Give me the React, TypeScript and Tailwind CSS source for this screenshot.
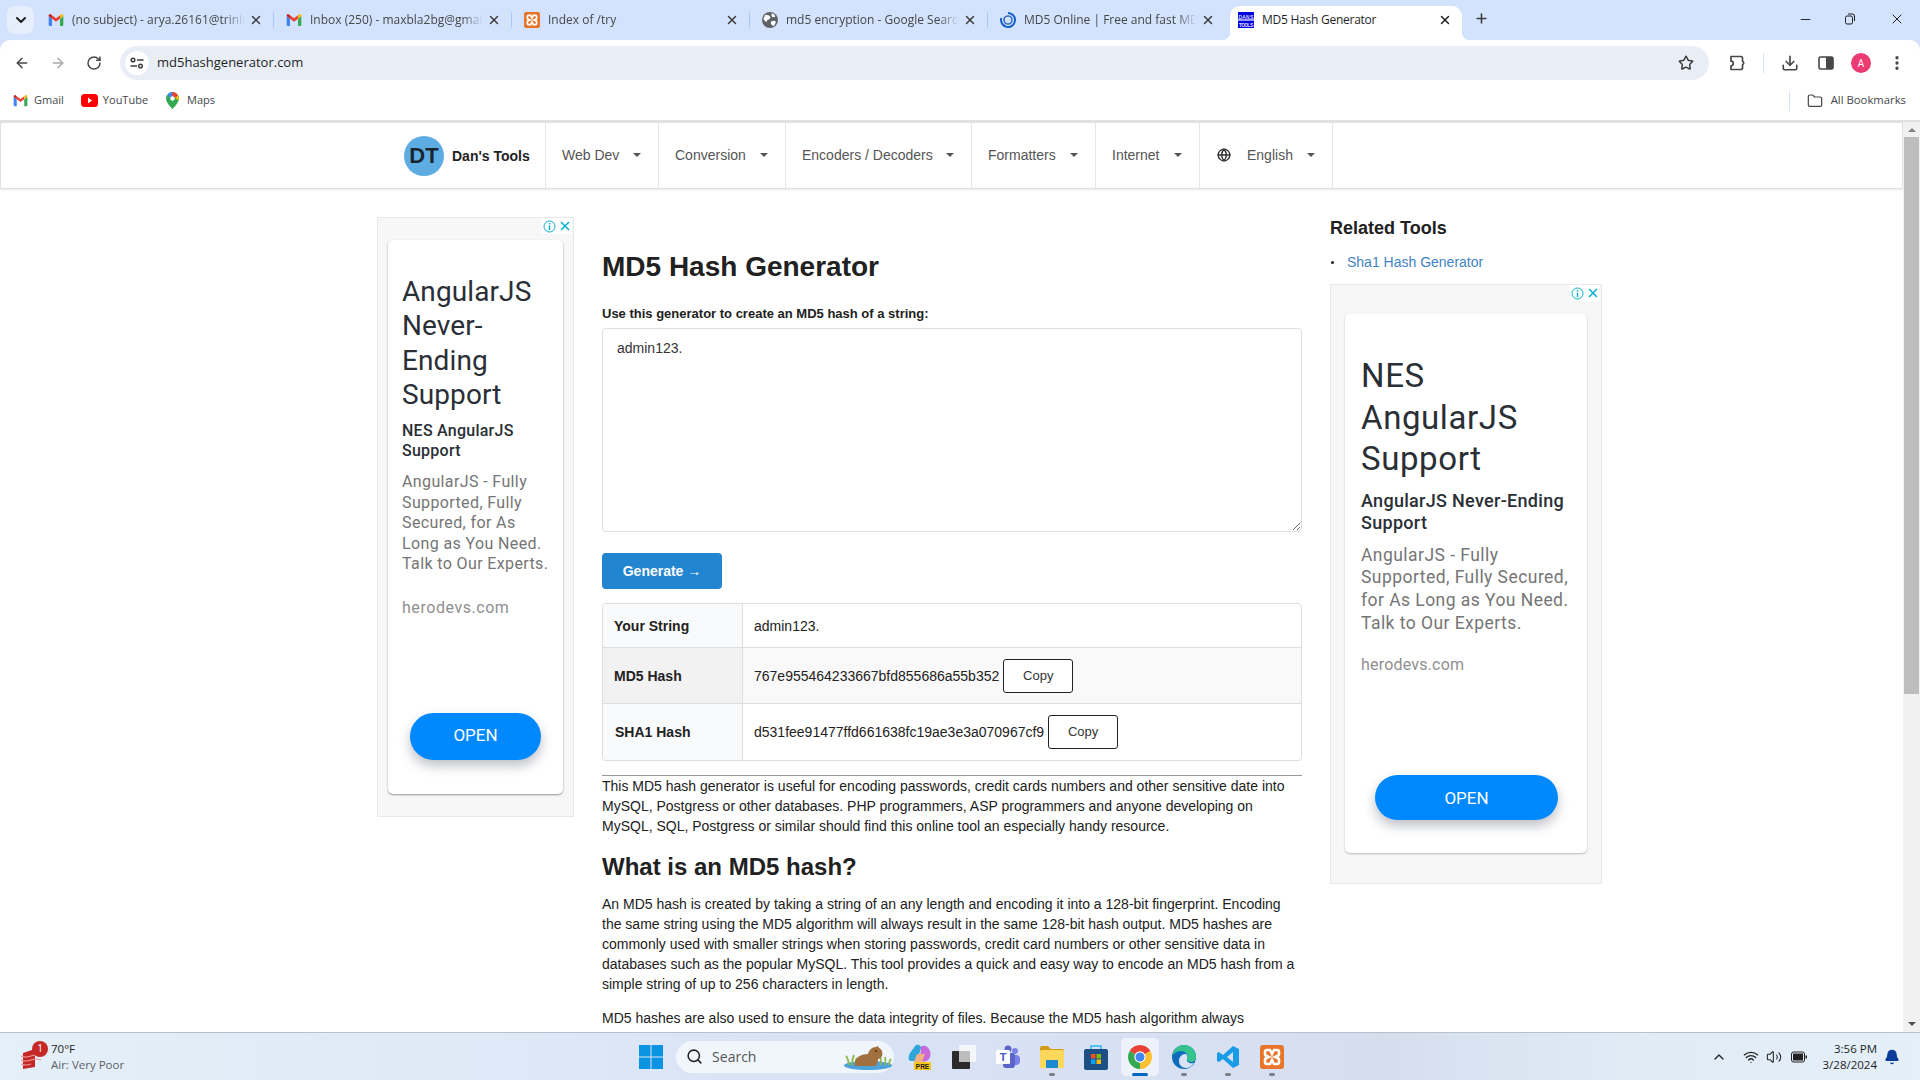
import { ReactNode } from 'react'
import {
  ArrowLeft,
  ArrowRight,
  RotateCw,
  Star,
  Download,
  EllipsisVertical,
  Folder,
  X,
  Plus,
  Minus,
  ChevronDown,
  ChevronUp,
  Search,
  Wifi,
  Volume2,
  Bell,
  Globe,
} from 'lucide-react'

const GmailIcon = ({ size = 16 }: { size?: number }) => (
  <svg width={size} height={size} viewBox="0 0 24 24" className="shrink-0">
    <path d="M1 6v13a2 2 0 0 0 2 2h3V10z" fill="#4285f4" />
    <path d="M23 6v13a2 2 0 0 1-2 2h-3V10z" fill="#34a853" />
    <path d="M6 10V5l6 4.5L18 5v5l-6 4.5z" fill="#ea4335" />
    <path d="M18 5l1.800-1.400A2 2 0 0 1 23 5.200V6l-5 4z" fill="#fbbc04" />
    <path d="M6 5L4.200 3.600A2 2 0 0 0 1 5.200V6l5 4z" fill="#c5221f" />
  </svg>
)

const XamppIcon = ({ size = 16 }: { size?: number }) => (
  <svg width={size} height={size} viewBox="0 0 24 24" className="shrink-0">
    <rect width="24" height="24" rx="3" fill="#e8742a" />
    <path d="M7 5h3l2 4 2-4h3a2 2 0 0 1 2 2v2a2 2 0 0 1-2 2l-2 1 2 1a2 2 0 0 1 2 2v2a2 2 0 0 1-2 2h-3l-2-4-2 4H7a2 2 0 0 1-2-2v-2a2 2 0 0 1 2-2l2-1-2-1a2 2 0 0 1-2-2V7a2 2 0 0 1 2-2z" fill="none" stroke="#fff" strokeWidth="2.600" />
  </svg>
)

const EarthIcon = () => (
  <svg width="16" height="16" viewBox="0 0 24 24" className="shrink-0">
    <circle cx="12" cy="12" r="12" fill="#5f6368" />
    <path d="M5 4l5 1 3 3-2 3-3 1-1 3-3-2-2-3zM14 14l5-1 2 2-3 6-3-1-2-3zM15 2l4 2 1 3-4 1-2-3z" fill="#fff" />
  </svg>
)

const Md5OnlineIcon = () => (
  <svg width="16" height="16" viewBox="0 0 24 24" className="shrink-0">
    <path d="M12 1.500A10.500 10.500 0 1 1 2 9" fill="none" stroke="#1a5fd0" strokeWidth="3" />
    <circle cx="12" cy="12" r="6" fill="none" stroke="#3b6fc4" strokeWidth="2.500" />
  </svg>
)

const DansFavicon = () => (
  <svg width="16" height="16" viewBox="0 0 16 16" className="shrink-0">
    <rect width="16" height="16" fill="#0000e0" />
    <rect y="7.400" width="16" height="1.200" fill="#fff" />
    <text x="0.500" y="6.500" fontSize="6" fontFamily="Liberation Mono" fill="#fff" textLength="15">DANS</text>
    <text x="0.500" y="14.500" fontSize="6" fontFamily="Liberation Mono" fill="#fff" textLength="15">TOOLS</text>
  </svg>
)

const tabs = [
  { title: '(no subject) - arya.26161@trinity', icon: <GmailIcon /> },
  { title: 'Inbox (250) - maxbla2bg@gmail.com', icon: <GmailIcon /> },
  { title: 'Index of /try', icon: <XamppIcon /> },
  { title: 'md5 encryption - Google Search', icon: <EarthIcon /> },
  { title: 'MD5 Online | Free and fast MD5', icon: <Md5OnlineIcon /> },
]

function TabStrip() {
  return (
    <div className="flex h-10 shrink-0 items-start bg-[#d3e3fd] pl-[7px] pt-[6px] font-['Open_Sans',sans-serif] text-xs text-[#45474a]">
      <div className="flex h-7 w-[27px] items-center justify-center rounded-lg bg-[#e6eefc]">
        <ChevronDown className="h-4 w-4 text-[#1f1f1f]" strokeWidth={3} />
      </div>
      <div className="ml-[2px] mt-[3px] flex w-[1194px]">
        {tabs.map((t, i) => (
          <div key={t.title} className="flex h-[22px] w-[238px] items-center pl-3 pr-[11px]">
            {t.icon}
            <span className="ml-2 flex-1 overflow-hidden whitespace-nowrap [mask-image:linear-gradient(90deg,#000_88%,transparent)]">{t.title}</span>
            <X className="ml-1 h-[14px] w-[14px] text-[#3c3c3c]" strokeWidth={2.5} />
            {i < 4 && <span className="ml-[10px] mr-[-11px] h-4 w-[1px] bg-[#a8c7fa]" />}
          </div>
        ))}
      </div>
      <div className="relative flex h-[34px] w-[232px] items-start rounded-t-[10px] bg-white pl-2 pr-[10px] pt-[6px] text-[#1f1f1f]">
        <span className="absolute bottom-0 left-[-8px] h-2 w-2 bg-[radial-gradient(circle_at_0_0,#d3e3fd_8px,#fff_8.5px)]" />
        <span className="absolute bottom-0 right-[-8px] h-2 w-2 bg-[radial-gradient(circle_at_100%_0,#d3e3fd_8px,#fff_8.5px)]" />
        <DansFavicon />
        <span className="ml-2 flex-1 whitespace-nowrap tracking-[-0.25px]">MD5 Hash Generator</span>
        <X className="mt-[1px] h-[14px] w-[14px] text-[#1f1f1f]" strokeWidth={2.5} />
      </div>
      <Plus className="ml-[12px] mt-[5px] h-[15px] w-[15px] text-[#3c3c3c]" strokeWidth={2.5} />
      <div className="ml-auto flex items-center pr-[15px] pt-[5px] text-[#1f1f1f]">
        <Minus className="mr-[31px] h-[15px] w-[15px]" strokeWidth={1.5} />
        <svg width="12" height="12" viewBox="0 0 12 12" className="mr-[33px]" fill="none" stroke="#1f1f1f">
          <rect x="1.500" y="3" width="7" height="8" rx="1.500" />
          <path d="M4 1h4.500A2 2 0 0 1 10.500 3v5" />
        </svg>
        <X className="h-4 w-4" strokeWidth={1.5} />
      </div>
    </div>
  )
}

function Toolbar() {
  return (
    <div className="flex h-[46px] shrink-0 items-center rounded-t-[10px] bg-white text-[#474747]">
      <ArrowLeft className="ml-[14px] h-4 w-4" strokeWidth={2.2} />
      <ArrowRight className="ml-5 h-4 w-4 text-[#a9a9a9]" strokeWidth={2.2} />
      <RotateCw className="ml-5 h-4 w-4" strokeWidth={2.2} />
      <div className="ml-[18px] flex h-[34px] w-[1589px] items-center rounded-full bg-[#e9eef6] pl-[5px] pr-[15px]">
        <div className="flex h-6 w-6 items-center justify-center rounded-full bg-white">
          <svg width="14" height="12" viewBox="0 0 14 12" fill="none" stroke="#3c3c3c" strokeWidth="1.500">
            <circle cx="3" cy="3" r="1.800" />
            <path d="M7 3h6.500M0.500 9H7" />
            <circle cx="10.500" cy="9" r="1.800" />
          </svg>
        </div>
        <span className="ml-[8px] flex-1 font-['Open_Sans',sans-serif] text-[13px] text-[#1f1f1f]">md5hashgenerator.com</span>
        <Star className="h-4 w-4 text-[#3c3c3c]" strokeWidth={2.2} />
      </div>
      <svg width="16" height="18" viewBox="0 0 16 18" fill="none" stroke="#474747" strokeWidth="1.700" strokeLinejoin="round" className="ml-[20px]">
        <path d="M2 2.500h10a1.500 1.500 0 0 1 1.500 1.500v3.300a1.800 1.800 0 0 1 0 3.400V14a1.500 1.500 0 0 1-1.500 1.500H2v-3.700a2 2 0 0 0 0-4.600z" />
      </svg>
      <span className="ml-[18px] h-5 w-[1px] bg-[#d3e3fd]" />
      <Download className="ml-[17px] h-[18px] w-[18px]" strokeWidth={2.2} />
      <svg width="16" height="16" viewBox="0 0 16 16" className="ml-[19px]">
        <rect x="1" y="2" width="14" height="12" rx="1.500" fill="none" stroke="#474747" strokeWidth="1.600" />
        <rect x="8" y="2" width="7" height="12" fill="#474747" />
      </svg>
      <div className="ml-[17px] flex h-5 w-5 items-center justify-center rounded-full bg-[#ec3a72] font-['Open_Sans',sans-serif] text-[10px] text-white">A</div>
      <EllipsisVertical className="ml-[17px] h-[18px] w-[18px]" strokeWidth={2.4} />
    </div>
  )
}

function BookmarksBar() {
  return (
    <div className="flex h-[34px] shrink-0 items-center bg-white pb-[5px] font-['Open_Sans',sans-serif] text-[11px] text-[#45474a]">
      <div className="ml-[13px]"><GmailIcon size={15} /></div>
      <span className="ml-[6px]">Gmail</span>
      <svg width="17" height="13" viewBox="0 0 17 13" className="ml-[17px]">
        <rect width="17" height="13" rx="3.500" fill="#f00" />
        <path d="M7 3.500l4 3-4 3z" fill="#fff" />
      </svg>
      <span className="ml-[5px]">YouTube</span>
      <svg width="13" height="17" viewBox="0 0 13 17" className="ml-[18px]">
        <path d="M6.500 0A6.500 6.500 0 0 0 0 6.500C0 11 6.500 17 6.500 17S13 11 13 6.500A6.500 6.500 0 0 0 6.500 0z" fill="#34a853" />
        <path d="M2 2A6.500 6.500 0 0 1 6.500 0L6 4 3.500 6.500z" fill="#4285f4" />
        <path d="M6.500 0A6.500 6.500 0 0 1 12 3.500L9 6 6 4z" fill="#ea4335" />
        <path d="M12 3.500a6.500 6.500 0 0 1 .5 5L9 6z" fill="#fbbc04" />
        <circle cx="6.500" cy="6.500" r="2.200" fill="#fff" />
      </svg>
      <span className="ml-[8px]">Maps</span>
      <span className="ml-auto h-5 w-[1px] bg-[#d3e3fd]" />
      <Folder className="ml-[17px] h-4 w-4 text-[#45474a]" strokeWidth={1.8} />
      <span className="ml-2 mr-[14px] text-[11.3px]">All Bookmarks</span>
    </div>
  )
}

const navItems = [
  { label: 'Web Dev', cls: 'w-[113px]' },
  { label: 'Conversion', cls: 'w-[127px]' },
  { label: 'Encoders / Decoders', cls: 'w-[186px]' },
  { label: 'Formatters', cls: 'w-[124px]' },
  { label: 'Internet', cls: 'w-[104px]' },
]

const Caret = () => <span className="ml-auto mr-[2px] h-0 w-0 border-x-[4px] border-t-[4px] border-x-transparent border-t-[#555]" />

function SiteNav() {
  return (
    <div className="flex h-[67px] shrink-0 items-stretch border border-[#e0e1e2] bg-white pl-[403px] text-sm text-[#555] shadow-[0_1px_2px_rgba(34,36,38,0.1)]">
      <div className="flex w-[142px] items-center border-r border-[#e6e6e6]">
        <div className="flex h-10 w-10 items-center justify-center rounded-full bg-[#5dade2] text-[22px] font-bold text-[#1b2530]">DT</div>
        <span className="ml-2 font-bold text-[#222]">Dan's Tools</span>
      </div>
      {navItems.map((n) => (
        <div key={n.label} className={`flex items-center border-r border-[#e6e6e6] pb-[1px] pl-[16px] pr-[15px] ${n.cls}`}>
          <span>{n.label}</span>
          <Caret />
        </div>
      ))}
      <div className="flex w-[133px] items-center border-r border-[#e6e6e6] pb-[1px] pl-[17px] pr-[15px]">
        <Globe className="h-[14px] w-[14px] text-[#333]" strokeWidth={2.4} />
        <span className="ml-[16px]">English</span>
        <Caret />
      </div>
    </div>
  )
}

const AdMarks = () => (
  <div className="absolute right-[1px] top-0 flex h-4 items-center gap-[3px] bg-white px-[1px]">
    <svg width="13" height="13" viewBox="0 0 13 13" fill="none" stroke="#00aecd">
      <circle cx="6.500" cy="6.500" r="5.500" />
      <path d="M6.500 5.500v4.500M6.500 3v1.500" strokeWidth="1.400" />
    </svg>
    <svg width="12" height="12" viewBox="0 0 12 12" stroke="#00aecd" strokeWidth="1.500">
      <path d="M2 2l8 8M10 2l-8 8" />
    </svg>
  </div>
)

function LeftAd() {
  return (
    <div className="relative h-[600px] w-[197px] shrink-0 border border-[#e8e8e8] bg-[#f7f7f7] pl-[10px] pt-[22px] font-['Roboto',sans-serif]">
      <AdMarks />
      <div className="h-[554px] w-[175px] rounded-[5px] bg-white pl-[14px] pt-[35px] shadow-[0_1px_2px_rgba(0,0,0,0.4)]">
        <div className="text-[28px] leading-[34.300px] tracking-[0.1px] text-[#2a2f36]">AngularJS<br />Never-<br />Ending<br />Support</div>
        <div className="mt-[9px] text-[16px] font-medium leading-[20px] tracking-[0.25px] text-[#2a2f36]">NES AngularJS<br />Support</div>
        <div className="mt-[11px] text-[16px] leading-[20.500px] tracking-[0.38px] text-[#757575]">AngularJS - Fully<br />Supported, Fully<br />Secured, for As<br />Long as You Need.<br />Talk to Our Experts.</div>
        <div className="mt-[23px] text-[16px] leading-[20px] tracking-[0.55px] text-[#8f8f8f]">herodevs.com</div>
        <div className="ml-[8px] mt-[95px] flex h-[47px] w-[131px] items-center justify-center rounded-full bg-[#0088ff] text-[17px] text-white shadow-[0_6px_12px_rgba(40,50,70,0.3)]">OPEN</div>
      </div>
    </div>
  )
}

function RightAd() {
  return (
    <div className="relative h-[600px] w-[272px] border border-[#e8e8e8] bg-[#f7f7f7] pl-[14px] pt-[29px] font-['Roboto',sans-serif]">
      <AdMarks />
      <div className="h-[539px] w-[242px] rounded-[5px] bg-white pl-[16px] pt-[41px] shadow-[0_1px_2px_rgba(0,0,0,0.25)]">
        <div className="text-[33px] leading-[41.500px] tracking-[0.6px] text-[#2a2f36]">NES<br />AngularJS<br />Support</div>
        <div className="mt-[10px] text-[18px] font-medium leading-[22px] tracking-[0.3px] text-[#2a2f36]">AngularJS Never-Ending<br />Support</div>
        <div className="mt-[10px] text-[17.500px] leading-[22.700px] tracking-[0.45px] text-[#757575]">AngularJS - Fully<br />Supported, Fully Secured,<br />for As Long as You Need.<br />Talk to Our Experts.</div>
        <div className="mt-[20px] text-[16px] leading-[22px] tracking-[0.2px] text-[#8f8f8f]">herodevs.com</div>
        <div className="ml-[14px] mt-[99px] flex h-[45px] w-[183px] items-center justify-center rounded-full bg-[#0088ff] text-[17px] text-white shadow-[0_6px_12px_rgba(40,50,70,0.3)]">OPEN</div>
      </div>
    </div>
  )
}

const CopyButton = () => (
  <button className="ml-[4px] h-[34px] w-[70px] rounded-[3px] border border-[#222] bg-white text-[13px] text-[#333]">Copy</button>
)

function ResultTable() {
  return (
    <div className="mt-[14px] overflow-hidden rounded-[4px] border border-[#dedede] text-[14px] text-[#222]">
      <div className="flex h-[44px] items-stretch border-b border-[#dedede]">
        <div className="flex w-[140px] items-center border-r border-[#dedede] bg-[#f9fafb] pl-[11px] font-bold">Your String</div>
        <div className="flex items-center pl-[11px]">admin123.</div>
      </div>
      <div className="flex h-[56px] items-stretch border-b border-[#dedede] bg-[#f9f9f9]">
        <div className="flex w-[140px] items-center border-r border-[#dedede] bg-[#f2f2f2] pl-[11px] font-bold">MD5 Hash</div>
        <div className="flex items-center pl-[11px]">767e955464233667bfd855686a55b352<CopyButton /></div>
      </div>
      <div className="flex h-[56px] items-stretch">
        <div className="flex w-[140px] items-center border-r border-[#dedede] bg-[#f9fafb] pl-[12px] font-bold">SHA1 Hash</div>
        <div className="flex items-center pl-[11px]">d531fee91477ffd661638fc19ae3e3a070967cf9<CopyButton /></div>
      </div>
    </div>
  )
}

function MainColumn() {
  return (
    <div className="ml-[28px] w-[700px] shrink-0 text-sm leading-[20px] text-[#212121]">
      <h1 className="mt-[32px] text-[28px] font-bold leading-[36px]">MD5 Hash Generator</h1>
      <div className="mt-[19px] text-[13px] font-bold">Use this generator to create an MD5 hash of a string:</div>
      <textarea
        defaultValue="admin123."
        className="mt-[4px] block h-[204px] w-full resize rounded-[4px] border border-[#dedede] px-[14px] py-[9px] text-sm leading-[20px] text-[#333] outline-none"
      />
      <button className="mt-[21px] flex h-[36px] w-[120px] items-center justify-center rounded-[4px] bg-[#2185d0] font-bold text-white">Generate →</button>
      <ResultTable />
      <hr className="mt-[14px] border-t-[1px] border-[#999]" />
      <p>
        This MD5 hash generator is useful for encoding passwords, credit cards numbers and other sensitive date into MySQL, Postgress or other databases. PHP programmers, ASP programmers and anyone developing on MySQL, SQL, Postgress or similar should find this online tool an especially handy resource.
      </p>
      <h2 className="mt-[14px] text-2xl font-bold leading-[34px]">What is an MD5 hash?</h2>
      <p className="mt-[10px]">
        An MD5 hash is created by taking a string of an any length and encoding it into a 128-bit fingerprint. Encoding the same string using the MD5 algorithm will always result in the same 128-bit hash output. MD5 hashes are commonly used with smaller strings when storing passwords, credit card numbers or other sensitive data in databases such as the popular MySQL. This tool provides a quick and easy way to encode an MD5 hash from a simple string of up to 256 characters in length.
      </p>
      <p className="mt-[14px]">
        MD5 hashes are also used to ensure the data integrity of files. Because the MD5 hash algorithm always produces the same output for the same given input, users can compare a hash of the source file.
      </p>
    </div>
  )
}

function RightColumn() {
  return (
    <div className="ml-[28px] w-[272px] shrink-0 text-sm text-[#212121]">
      <h3 className="mt-[-2px] text-[18px] font-bold leading-[26px]">Related Tools</h3>
      <div className="mt-[11px] flex h-5 items-center">
        <span className="ml-[1px] h-[3px] w-[3px] rounded-full bg-[#222]" />
        <a className="ml-[13px] text-[#4183c4]">Sha1 Hash Generator</a>
      </div>
      <div className="mt-[12px]"><RightAd /></div>
    </div>
  )
}

function Scrollbar() {
  return (
    <div className="flex w-[17px] shrink-0 flex-col items-center bg-[#f1f1f1]">
      <span className="mt-[6px] h-0 w-0 border-x-[4px] border-b-[4px] border-x-transparent border-b-[#808080]" />
      <div className="mt-[5px] h-[557px] w-[15px] bg-[#bdbdbd]" />
      <span className="mb-[6px] mt-auto h-0 w-0 border-x-[4px] border-t-[4px] border-x-transparent border-t-[#505050]" />
    </div>
  )
}

function TaskIcon({ children, dot, active }: { children: ReactNode; dot?: boolean; active?: boolean }) {
  return (
    <div className={`relative flex h-[38px] w-[38px] items-center justify-center rounded-[5px] ${active ? 'bg-[#eef3fb]' : ''}`}>
      {children}
      {dot && <span className={`absolute bottom-0 h-[3px] rounded-full ${active ? 'w-4 bg-[#0067c0]' : 'w-[6px] bg-[#7a7f88]'}`} />}
    </div>
  )
}

function Taskbar() {
  return (
    <div className="flex h-[48px] shrink-0 items-center border-t border-[#b8c0cc] bg-[linear-gradient(90deg,#e4eff8_0%,#dfe9f7_25%,#d8e3f6_40%,#d8e1f3_60%,#d6deee_72%,#e0ebf6_85%,#e4eff8_100%)] font-['Open_Sans',sans-serif] text-[11.5px]">
      <div className="relative ml-[21px] h-7 w-5">
        <svg width="20" height="26" viewBox="0 0 20 26" className="mt-[2px]">
          <path d="M2 8l12-4v18l-12 2z" fill="#c62828" />
          <path d="M0 11q5 2 10 0t10 0M0 15q5 2 10 0t10 0M0 19q5 2 10 0" stroke="#ef9a9a" fill="none" strokeWidth="1.200" />
        </svg>
        <span className="absolute left-[11px] top-[-2px] flex h-4 w-4 items-center justify-center rounded-full bg-[#c62828] text-[10px] text-white">1</span>
      </div>
      <div className="ml-[10px] leading-[16px]">
        <div className="text-[#1f1f1f]">70°F</div>
        <div className="text-[#5c5f66]">Air: Very Poor</div>
      </div>
      <svg width="24" height="24" viewBox="0 0 24 24" className="ml-[515px]">
        <path d="M0 0h11.500v11.500H0zM12.500 0H24v11.500H12.500zM0 12.500h11.500V24H0zM12.500 12.500H24V24H12.500z" fill="#0a94e2" />
      </svg>
      <div className="ml-[13px] flex h-[32px] w-[218px] items-center rounded-full bg-[#f1f5fc] pl-[10px] text-[14px] text-[#555]">
        <Search className="h-[17px] w-[17px] text-[#222]" strokeWidth={2.2} />
        <span className="ml-[9px]">Search</span>
        <svg width="50" height="26" viewBox="0 0 50 26" className="ml-auto mr-[1px]">
          <ellipse cx="25" cy="21.500" rx="24" ry="4.500" fill="#4ba3d8" />
          <path d="M6 21q-1-7-3-9M9 21q0-6 2-10M13 21q-1-4 1-7M38 21q0-6-1-10M42 21q1-5 0-8M46 21q0-4 2-6" stroke="#8db54e" strokeWidth="1.800" fill="none" />
          <path d="M12 22c-1-8 5-12 13-12 1-4 4-7 8-7l2-1 1 2c3 1 4 5 3 8-1 2-3 3-4 3 0 3-1 5-2 7z" fill="#a1703f" />
          <circle cx="33" cy="7" r="0.900" fill="#33210f" />
        </svg>
      </div>
      <div className="ml-[7px] flex items-center gap-[6px]">
        <TaskIcon>
          <svg width="24" height="26" viewBox="0 0 24 26">
            <path d="M8 1c3-1 5 1 5 3l-4 13H3C0 17 0 13 2 9z" fill="#2fa6d9" />
            <path d="M13 3c1-2 6-2 8 2 2 3 2 7 0 10-2 3-6 3-9 2z" fill="#c86ad9" />
            <path d="M9 10h8l-3 8H6z" fill="#f4b183" />
            <rect x="6" y="18" width="17" height="8" rx="1" fill="#f5c518" />
            <text x="14.500" y="24.500" fontSize="6.500" fontWeight="700" textAnchor="middle" fontFamily="Liberation Sans" fill="#222">PRE</text>
          </svg>
        </TaskIcon>
        <TaskIcon>
          <svg width="26" height="26" viewBox="0 0 26 26">
            <rect x="8" y="1" width="17" height="17" fill="#f4f6fa" />
            <rect x="1" y="7" width="18" height="18" rx="1" fill="#2b2b2b" />
            <rect x="8" y="7" width="11" height="11" fill="#bdbdbd" />
          </svg>
        </TaskIcon>
        <TaskIcon>
          <svg width="26" height="24" viewBox="0 0 26 24">
            <circle cx="20" cy="6" r="3" fill="#7b83eb" />
            <rect x="17" y="10" width="8" height="10" rx="4" fill="#7b83eb" />
            <circle cx="13" cy="4" r="3.500" fill="#5b64c9" />
            <rect x="8" y="8" width="12" height="15" rx="3" fill="#5b64c9" />
            <rect x="1" y="5" width="14" height="14" rx="1.500" fill="#fff" />
            <text x="8" y="16" fontSize="11" fontWeight="700" textAnchor="middle" fontFamily="Liberation Sans" fill="#4b53bc">T</text>
          </svg>
        </TaskIcon>
        <TaskIcon dot>
          <svg width="24" height="22" viewBox="0 0 24 22">
            <path d="M0 2a2 2 0 0 1 2-2h6l3 3h11a2 2 0 0 1 2 2v2H0z" fill="#d39c14" />
            <rect y="4" width="24" height="18" rx="1.500" fill="#fbd75b" />
            <rect x="6" y="14" width="12" height="8" rx="1" fill="#1a8ad0" />
          </svg>
        </TaskIcon>
        <TaskIcon>
          <svg width="24" height="26" viewBox="0 0 24 26">
            <path d="M7 5V2h10v3" fill="none" stroke="#29b6f6" strokeWidth="1.500" />
            <rect y="5" width="24" height="21" rx="2" fill="#1c4f86" />
            <rect x="7" y="10" width="4.500" height="4.500" fill="#f25022" />
            <rect x="12.500" y="10" width="4.500" height="4.500" fill="#7fba00" />
            <rect x="7" y="15.500" width="4.500" height="4.500" fill="#00a4ef" />
            <rect x="12.500" y="15.500" width="4.500" height="4.500" fill="#ffb900" />
          </svg>
        </TaskIcon>
        <TaskIcon dot active>
          <svg width="24" height="24" viewBox="0 0 24 24">
            <path d="M12 12L1.610 6A12 12 0 0 1 22.390 6z" fill="#ea4335" />
            <path d="M12 12L22.390 6A12 12 0 0 1 12 24z" fill="#fbc02d" />
            <path d="M12 12L12 24A12 12 0 0 1 1.610 6z" fill="#34a853" />
            <circle cx="12" cy="12" r="5.700" fill="#fff" />
            <circle cx="12" cy="12" r="4.500" fill="#4285f4" />
          </svg>
        </TaskIcon>
        <TaskIcon dot>
          <svg width="24" height="24" viewBox="0 0 24 24">
            <circle cx="12" cy="12" r="12" fill="#0f6cbd" />
            <path d="M0.500 10C2 4 6.500 0 12 0c7 0 12 5 12 12 0 3-2 5-5 5-2 0-4-1-4-3 1-2 1-4-1-6-3-3-9-3-13.500 2z" fill="#35c48d" />
            <path d="M7 16c0-4 3-7 6-7 2 0 3 2 2 5-1 3 3 5 7 4-2 3-5 5-8 5-4 0-7-3-7-7z" fill="#d8e3f6" />
          </svg>
        </TaskIcon>
        <TaskIcon dot>
          <svg width="24" height="24" viewBox="0 0 24 24">
            <path d="M17 1l6 3v16l-6 3L7 14l-4 3-2-1V8l2-1 4 3zM17 7l-6 5 6 5z" fill="#1a9be8" />
          </svg>
        </TaskIcon>
        <TaskIcon dot>
          <XamppIcon size={24} />
        </TaskIcon>
      </div>
      <ChevronUp className="ml-auto h-4 w-4 text-[#222]" strokeWidth={2} />
      <Wifi className="ml-[16px] h-4 w-4 text-[#222]" strokeWidth={2} />
      <Volume2 className="ml-[7px] h-4 w-4 text-[#222]" strokeWidth={1.6} />
      <svg width="16" height="12" viewBox="0 0 16 12" className="ml-[9px]">
        <rect x="0.500" y="1" width="13" height="10" rx="2" fill="none" stroke="#222" />
        <rect x="2" y="2.500" width="10" height="7" fill="#222" />
        <rect x="14.500" y="4.500" width="1.500" height="3" fill="#222" />
      </svg>
      <div className="ml-[16px] text-right leading-[16px] text-[#1f1f1f]">
        <div>3:56 PM</div>
        <div>3/28/2024</div>
      </div>
      <Bell className="ml-[7px] mr-[20px] h-4 w-4 fill-[#0a3d9a] text-[#0a3d9a]" />
    </div>
  )
}

export default function App() {
  return (
    <div className="flex h-[1080px] w-[1920px] flex-col overflow-hidden bg-[#d3e3fd] font-['Liberation_Sans',Arial,sans-serif]">
      <TabStrip />
      <Toolbar />
      <BookmarksBar />
      <div className="flex h-[912px] min-h-0 flex-1 border-t-2 border-[#e0e0e0] bg-white">
        <div className="min-w-0 flex-1 overflow-hidden">
          <SiteNav />
          <div className="ml-[377px] mt-[28px] flex items-start">
            <LeftAd />
            <MainColumn />
            <RightColumn />
          </div>
        </div>
        <Scrollbar />
      </div>
      <Taskbar />
    </div>
  )
}
